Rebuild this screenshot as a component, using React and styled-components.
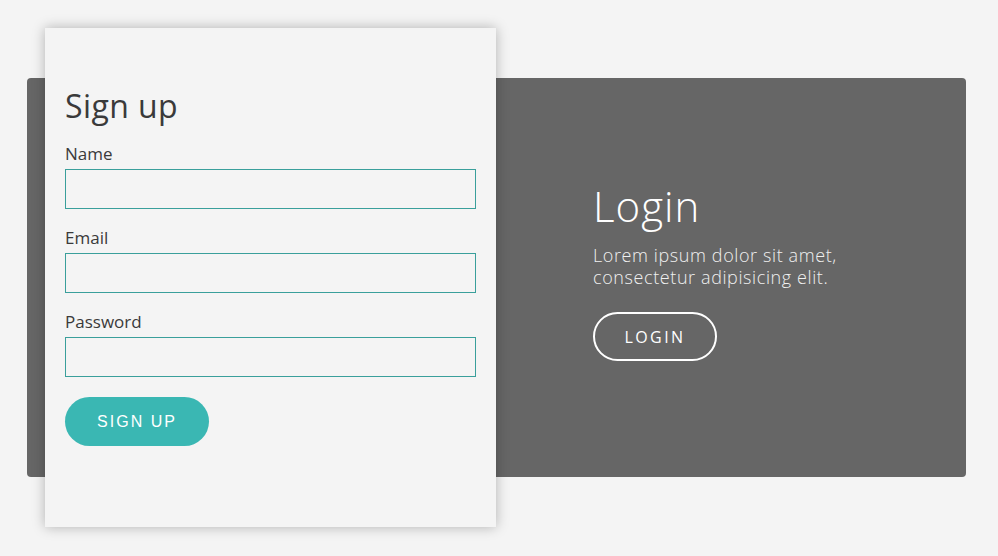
import React from 'react'
import styled, { createGlobalStyle } from 'styled-components'

const GlobalStyle = createGlobalStyle`
  * {
    box-sizing: border-box;
  }
  body {
    margin: 0;
    background: #f4f4f4;
    font-family: 'Open Sans', 'Noto Sans', sans-serif;
    color: #3a3a3a;
  }
`

const Page = styled.div`
  width: 998px;
  height: 556px;
  padding: 78px 32px 0 27px;
`

const Panel = styled.div`
  height: 399px;
  background: #666666;
  border-radius: 4px;
  display: flex;
  align-items: stretch;
  padding-left: 18px;
`

const Card = styled.div`
  width: 451px;
  margin: -50px 0;
  background: #f4f4f4;
  box-shadow: 0 0 12px rgba(0, 0, 0, 0.28);
  padding: 56px 20px 0 20px;
  display: flex;
  flex-direction: column;
`

const CardTitle = styled.h2`
  margin: 0 0 15px;
  font-size: 32px;
  font-weight: 400;
  letter-spacing: 0.4px;
  line-height: 44px;
  color: #3a3a3a;
`

const Field = styled.div`
  display: flex;
  flex-direction: column;
  margin-bottom: ${(p) => (p.last ? '20px' : '18px')};
`

const Label = styled.label`
  font-size: 17px;
  line-height: 22px;
  margin-bottom: 4px;
  color: #3a3a3a;
`

const Input = styled.input`
  width: 411px;
  height: 40px;
  border: 1px solid #3a9f9b;
  background: #f4f4f4;
  outline: none;
  padding: 0 10px;
`

const SignUpButton = styled.button`
  width: 144px;
  height: 49px;
  border: none;
  border-radius: 25px;
  background: #3ab7b3;
  color: #ffffff;
  font-family: 'Liberation Sans', Arial, sans-serif;
  font-size: 16px;
  letter-spacing: 2px;
  text-transform: uppercase;
  cursor: pointer;
`

const Side = styled.div`
  flex: 1;
  display: flex;
  flex-direction: column;
  justify-content: center;
  padding: 0 0 13px 97px;
  color: #ffffff;
`

const SideTitle = styled.h2`
  margin: 0 0 13px;
  font-size: 42px;
  font-weight: 300;
  letter-spacing: 1px;
  line-height: 50px;
`

const SideText = styled.p`
  margin: 0 0 24px;
  font-size: 18px;
  font-weight: 300;
  letter-spacing: 0.6px;
  line-height: 22px;
  color: #f0f0f0;
`

const LoginButton = styled.button`
  width: 124px;
  height: 49px;
  border: 2px solid #ffffff;
  border-radius: 25px;
  background: transparent;
  color: #ffffff;
  font-family: 'Open Sans', sans-serif;
  font-size: 16px;
  letter-spacing: 2.4px;
  text-transform: uppercase;
  cursor: pointer;
`

export default function App() {
  return (
    <>
      <GlobalStyle />
      <Page>
        <Panel>
          <Card>
            <CardTitle>Sign up</CardTitle>
            <Field>
              <Label>Name</Label>
              <Input type="text" />
            </Field>
            <Field>
              <Label>Email</Label>
              <Input type="email" />
            </Field>
            <Field last>
              <Label>Password</Label>
              <Input type="password" />
            </Field>
            <div>
              <SignUpButton>Sign up</SignUpButton>
            </div>
          </Card>
          <Side>
            <SideTitle>Login</SideTitle>
            <SideText>
              Lorem ipsum dolor sit amet,
              <br />
              consectetur adipisicing elit.
            </SideText>
            <div>
              <LoginButton>Login</LoginButton>
            </div>
          </Side>
        </Panel>
      </Page>
    </>
  )
}
